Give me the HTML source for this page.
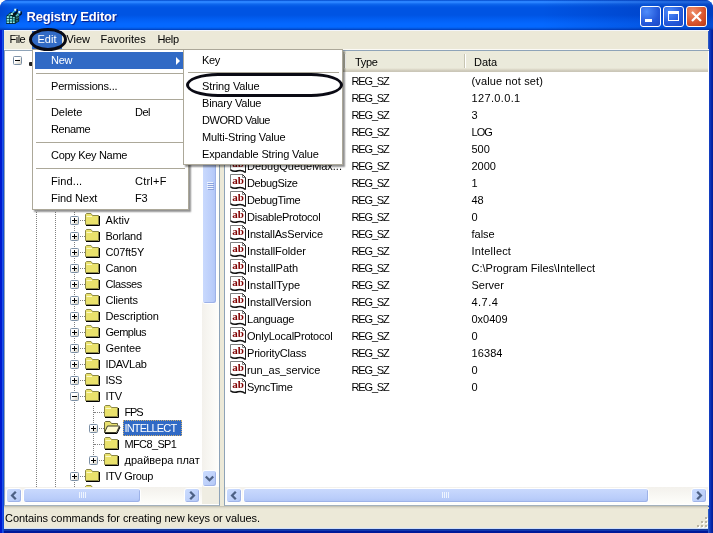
<!DOCTYPE html>
<html><head><meta charset="utf-8"><title>Registry Editor</title>
<style>
*{box-sizing:border-box;margin:0;padding:0}
html,body{width:713px;height:533px;overflow:hidden;background:#fff}
body{font-family:"Liberation Sans","DejaVu Sans",sans-serif;font-size:11px;color:#000;position:relative}
div,span,svg{position:absolute}
#win{will-change:transform;left:0;top:0;width:713px;height:533px;background:#0a36d6;border-radius:8px 8px 0 0;overflow:hidden}
#title{left:0;top:0;width:713px;height:30px;background:linear-gradient(90deg,rgba(0,20,140,.18) 0,rgba(0,20,140,0) 12px,rgba(0,20,140,0) 76%,rgba(0,16,120,.32) 100%),linear-gradient(#0046c8 0px,#2a83ff 1.5px,#2a83ff 2.5px,#0f68ee 4px,#045ae6 6px,#0054e3 8px,#0054e3 15px,#0260f5 20px,#0468ff 24px,#0468ff 27px,#0358e0 28.5px,#003cba 30px)}
#title .txt{left:26.5px;top:9px;font-size:13px;letter-spacing:-0.2px;font-weight:bold;color:#fff;text-shadow:1px 1px 1px #0a1883;white-space:nowrap}
#client{left:4px;top:30px;width:704px;height:498px;background:#ece9d8}
#bl{left:0;top:30px;width:4px;height:503px;background:linear-gradient(90deg,#0019cf 0,#0019cf 1.5px,#1a50e8 2.5px,#0a42d2 4px)}
#br{left:708px;top:30px;width:5px;height:503px;background:linear-gradient(90deg,#4070c8 0,#1844c4 1px,#0c34b8 2.5px,#0528a8 3.5px,#001c98 5px)}
#bb{left:0;top:528px;width:713px;height:5px;background:linear-gradient(#d0e0fc 0,#d0e0fc 1px,#1a3a90 1px,#1a3a90 2px,#1038b0 2px,#1038b0 3px,#001898 3.5px,#001898 5px)}
.mi{top:31px;height:17px;line-height:17px;white-space:nowrap}
.menu{background:#fff;border:1px solid #aca899;box-shadow:2px 2px 1.5px rgba(0,0,0,.42)}
.it{height:17px;line-height:17px;white-space:nowrap}
.sep{height:1px;background:#aca899}
.r{height:17px;line-height:17px;white-space:nowrap}
.t{height:16px;line-height:16px;white-space:nowrap}
.pane{background:#fff;border:1px solid #8ea3b8;border-bottom-color:#a3b1bd}
.hd{top:51px;height:21px;background:linear-gradient(#ebeadb 0,#ebeadb 17px,#e2dece 18px,#d6d2c2 19px,#cbc7b8 20px,#cbc7b8 21px)}
.sbh{height:17px;background:linear-gradient(#f3f1ec,#fefefb)}
.sbv{width:17px;background:linear-gradient(90deg,#f3f1ec,#fefefb)}
.btn{width:16px;height:15px;background:linear-gradient(135deg,#cbdcff,#b4c8f6);border:1px solid #fff;border-radius:3px;box-shadow:inset -1px -1px 0 #a0b4e8}
.thh{height:15px;background:linear-gradient(#c9d9fd,#bacdfa 70%,#b0c4f5);border:1px solid #fff;border-radius:3px;box-shadow:inset -1px -1px 0 #9db2e8}
.thv{width:15px;background:linear-gradient(90deg,#c9d9fd,#bacdfa 70%,#b0c4f5);border:1px solid #fff;border-radius:3px;box-shadow:inset -1px -1px 0 #9db2e8}
.dv{width:0;border-left:1px dotted #808080}
.dh{height:0;border-top:1px dotted #808080}
.pm{width:9px;height:9px;border:1px solid #7b8fa5;border-radius:1.5px;background:linear-gradient(135deg,#fff 40%,#d4d0c2)}
.pm i{position:absolute;left:1px;top:3px;width:5px;height:1px;background:#000}
.pm b{position:absolute;left:3px;top:1px;width:1px;height:5px;background:#000}
</style></head><body>
<div id="win">
<div id="title"><span class="txt">Registry Editor</span></div>
<div id="client"></div><div id="bb"></div><div id="bl"></div><div id="br"></div>

<svg style="left:6px;top:8px" width="16" height="16" viewBox="0 0 16 16">
<polygon points="0.500,8 4,4.500 11.500,4.500 9,8" fill="#03181c"/>
<polygon points="9,8 11.500,4.500 13.200,5.500 13.200,13.500 9,15.800" fill="#0a3436"/>
<rect x="0.300" y="7.800" width="8.900" height="8" fill="#052a2c"/>
<g fill="#45c4c0"><rect x="0.700" y="8.200" width="2.400" height="2"/><rect x="3.700" y="8.200" width="2.400" height="2"/><rect x="6.700" y="9" width="2" height="1.500"/><rect x="0.700" y="10.800" width="2.400" height="2"/><rect x="3.700" y="10.800" width="2.400" height="2"/><rect x="6.700" y="11" width="2" height="1.800"/><rect x="0.700" y="13.300" width="2.400" height="2"/><rect x="3.700" y="13.300" width="2.400" height="2"/><rect x="6.700" y="13.300" width="2.200" height="2"/></g>
<g fill="#e4fffb"><rect x="1.200" y="8.500" width="1.400" height="1"/><rect x="4.500" y="8.500" width="1.200" height="1"/><rect x="1.200" y="11.200" width="1.400" height="1"/><rect x="4.300" y="11" width="1.200" height="1.200"/><rect x="1.400" y="13.800" width="1.300" height="1"/><rect x="4.300" y="13.800" width="1.300" height="1"/><rect x="7.200" y="13.700" width="1" height="1"/><rect x="7.500" y="9.300" width="0.900" height="1"/></g>
<polygon points="1.500,7.600 3.800,5.600 6,5.600 4,7.600" fill="#45c4c0"/>
<rect x="5" y="5.200" width="2" height="1.600" fill="#e4fffb"/>
<path d="M11 7v6.500M12.300 6.500v3" stroke="#7fd8d4" stroke-width="0.700" stroke-dasharray="1.500 1"/>
<path d="M8.200 3.200L6.300 5.300M12.400 5.600L10 8" stroke="#58c8c8" stroke-width="1.200"/>
<rect x="8.200" y="0.700" width="2.300" height="2.300" fill="#9fe8e4"/><rect x="8.700" y="0.900" width="1.200" height="1.300" fill="#fff"/><path d="M11.100 1.200v2.500l-1.800 1.500" stroke="#020c14" stroke-width="1.300" fill="none"/>
<rect x="12.300" y="3" width="2.300" height="2.400" fill="#9fe8e4"/><rect x="12.700" y="3.200" width="1.200" height="1.400" fill="#fff"/><path d="M15.200 3.500v2.500l-1.800 1.500" stroke="#020c14" stroke-width="1.300" fill="none"/>
<path d="M0.300 15.800H9.300" stroke="#02101a" stroke-width="0.800"/>
</svg>
<div style="left:640px;top:6px;width:21px;height:21px;border:1px solid #fff;border-radius:3px;background:radial-gradient(circle at 30% 25%,#4f8dfb,#2458d9 60%,#1c49c4)"><div style="left:4px;top:12px;width:7px;height:3px;background:#fff"></div></div>
<div style="left:663px;top:6px;width:21px;height:21px;border:1px solid #fff;border-radius:3px;background:radial-gradient(circle at 30% 25%,#4f8dfb,#2458d9 60%,#1c49c4)"><div style="left:4px;top:4px;width:11px;height:10px;border:1px solid #fff;border-top-width:3px"></div></div>
<div style="left:686px;top:6px;width:21px;height:21px;border:1px solid #fff;border-radius:3px;background:radial-gradient(circle at 30% 25%,#f0906c,#d8532c 60%,#b93a16)"><svg width="19" height="19" viewBox="0 0 19 19" style="left:0;top:0"><path d="M5 5L14 14M14 5L5 14" stroke="#fff" stroke-width="2.2"/></svg></div>
<span class="mi" style="left:9.5px;letter-spacing:-0.5px">File</span>
<span class="mi" style="left:32px;top:30px;width:30px;height:20px;background:#316ac5"></span>
<span class="mi" style="left:37.5px;color:#fff">Edit</span>
<span class="mi" style="left:66.5px;letter-spacing:-0.1px">View</span>
<span class="mi" style="left:100.5px">Favorites</span>
<span class="mi" style="left:157.5px;letter-spacing:-0.36px">Help</span>
<div class="pane" style="left:4px;top:50px;width:216px;height:456px"></div>
<div class="pm" style="left:13px;top:56px"><i></i></div>
<div style="left:29px;top:62px;width:4px;height:4px;background:#222;border-radius:1px 0 0 1px"></div>
<div class="dv" style="left:36px;top:212px;height:275px"></div>
<div class="dv" style="left:55px;top:212px;height:275px"></div>
<div class="dv" style="left:74px;top:212px;height:275px"></div>
<div class="dv" style="left:93px;top:406px;height:55px"></div>
<div class="dh" style="left:75px;top:220px;width:10px"></div>
<div class="pm" style="left:70px;top:216px"><i></i><b></b></div>
<svg style="left:85px;top:212px" width="17" height="15" viewBox="0 0 17 15"><path d="M0.5 12.5V2.5l1-1h4.5l1.5 2h6v9z" fill="#eae26c" stroke="#8c8848"/><path d="M1.5 4.5h5.5" stroke="#fbf8c8"/><path d="M1 13.5h13.500V4" fill="none" stroke="#000"/></svg>
<span class="t" style="left:105.5px;top:212px;letter-spacing:0.07px">Aktiv</span>
<div class="dh" style="left:75px;top:236px;width:10px"></div>
<div class="pm" style="left:70px;top:232px"><i></i><b></b></div>
<svg style="left:85px;top:228px" width="17" height="15" viewBox="0 0 17 15"><path d="M0.5 12.5V2.5l1-1h4.5l1.5 2h6v9z" fill="#eae26c" stroke="#8c8848"/><path d="M1.5 4.5h5.5" stroke="#fbf8c8"/><path d="M1 13.5h13.500V4" fill="none" stroke="#000"/></svg>
<span class="t" style="left:105.5px;top:228px;letter-spacing:-0.22px">Borland</span>
<div class="dh" style="left:75px;top:252px;width:10px"></div>
<div class="pm" style="left:70px;top:248px"><i></i><b></b></div>
<svg style="left:85px;top:244px" width="17" height="15" viewBox="0 0 17 15"><path d="M0.5 12.5V2.5l1-1h4.5l1.5 2h6v9z" fill="#eae26c" stroke="#8c8848"/><path d="M1.5 4.5h5.5" stroke="#fbf8c8"/><path d="M1 13.5h13.500V4" fill="none" stroke="#000"/></svg>
<span class="t" style="left:105.5px;top:244px;letter-spacing:-0.16px">C07ft5Y</span>
<div class="dh" style="left:75px;top:268px;width:10px"></div>
<div class="pm" style="left:70px;top:264px"><i></i><b></b></div>
<svg style="left:85px;top:260px" width="17" height="15" viewBox="0 0 17 15"><path d="M0.5 12.5V2.5l1-1h4.5l1.5 2h6v9z" fill="#eae26c" stroke="#8c8848"/><path d="M1.5 4.5h5.5" stroke="#fbf8c8"/><path d="M1 13.5h13.500V4" fill="none" stroke="#000"/></svg>
<span class="t" style="left:105.5px;top:260px;letter-spacing:-0.26px">Canon</span>
<div class="dh" style="left:75px;top:284px;width:10px"></div>
<div class="pm" style="left:70px;top:280px"><i></i><b></b></div>
<svg style="left:85px;top:276px" width="17" height="15" viewBox="0 0 17 15"><path d="M0.5 12.5V2.5l1-1h4.5l1.5 2h6v9z" fill="#eae26c" stroke="#8c8848"/><path d="M1.5 4.5h5.5" stroke="#fbf8c8"/><path d="M1 13.5h13.500V4" fill="none" stroke="#000"/></svg>
<span class="t" style="left:105.5px;top:276px;letter-spacing:-0.39px">Classes</span>
<div class="dh" style="left:75px;top:300px;width:10px"></div>
<div class="pm" style="left:70px;top:296px"><i></i><b></b></div>
<svg style="left:85px;top:292px" width="17" height="15" viewBox="0 0 17 15"><path d="M0.5 12.5V2.5l1-1h4.5l1.5 2h6v9z" fill="#eae26c" stroke="#8c8848"/><path d="M1.5 4.5h5.5" stroke="#fbf8c8"/><path d="M1 13.5h13.500V4" fill="none" stroke="#000"/></svg>
<span class="t" style="left:105.5px;top:292px;letter-spacing:-0.2px">Clients</span>
<div class="dh" style="left:75px;top:316px;width:10px"></div>
<div class="pm" style="left:70px;top:312px"><i></i><b></b></div>
<svg style="left:85px;top:308px" width="17" height="15" viewBox="0 0 17 15"><path d="M0.5 12.5V2.5l1-1h4.5l1.5 2h6v9z" fill="#eae26c" stroke="#8c8848"/><path d="M1.5 4.5h5.5" stroke="#fbf8c8"/><path d="M1 13.5h13.500V4" fill="none" stroke="#000"/></svg>
<span class="t" style="left:105.5px;top:308px;letter-spacing:-0.17px">Description</span>
<div class="dh" style="left:75px;top:332px;width:10px"></div>
<div class="pm" style="left:70px;top:328px"><i></i><b></b></div>
<svg style="left:85px;top:324px" width="17" height="15" viewBox="0 0 17 15"><path d="M0.5 12.5V2.5l1-1h4.5l1.5 2h6v9z" fill="#eae26c" stroke="#8c8848"/><path d="M1.5 4.5h5.5" stroke="#fbf8c8"/><path d="M1 13.5h13.500V4" fill="none" stroke="#000"/></svg>
<span class="t" style="left:105.5px;top:324px;letter-spacing:-0.5px">Gemplus</span>
<div class="dh" style="left:75px;top:348px;width:10px"></div>
<div class="pm" style="left:70px;top:344px"><i></i><b></b></div>
<svg style="left:85px;top:340px" width="17" height="15" viewBox="0 0 17 15"><path d="M0.5 12.5V2.5l1-1h4.5l1.5 2h6v9z" fill="#eae26c" stroke="#8c8848"/><path d="M1.5 4.5h5.5" stroke="#fbf8c8"/><path d="M1 13.5h13.500V4" fill="none" stroke="#000"/></svg>
<span class="t" style="left:105.5px;top:340px;letter-spacing:-0.11px">Gentee</span>
<div class="dh" style="left:75px;top:364px;width:10px"></div>
<div class="pm" style="left:70px;top:360px"><i></i><b></b></div>
<svg style="left:85px;top:356px" width="17" height="15" viewBox="0 0 17 15"><path d="M0.5 12.5V2.5l1-1h4.5l1.5 2h6v9z" fill="#eae26c" stroke="#8c8848"/><path d="M1.5 4.5h5.5" stroke="#fbf8c8"/><path d="M1 13.5h13.500V4" fill="none" stroke="#000"/></svg>
<span class="t" style="left:105.5px;top:356px;letter-spacing:-0.32px">IDAVLab</span>
<div class="dh" style="left:75px;top:380px;width:10px"></div>
<div class="pm" style="left:70px;top:376px"><i></i><b></b></div>
<svg style="left:85px;top:372px" width="17" height="15" viewBox="0 0 17 15"><path d="M0.5 12.5V2.5l1-1h4.5l1.5 2h6v9z" fill="#eae26c" stroke="#8c8848"/><path d="M1.5 4.5h5.5" stroke="#fbf8c8"/><path d="M1 13.5h13.500V4" fill="none" stroke="#000"/></svg>
<span class="t" style="left:105.5px;top:372px;letter-spacing:-0.48px">ISS</span>
<div class="dh" style="left:75px;top:396px;width:10px"></div>
<div class="pm" style="left:70px;top:392px"><i></i></div>
<svg style="left:85px;top:388px" width="17" height="15" viewBox="0 0 17 15"><path d="M0.5 12.5V2.5l1-1h4.5l1.5 2h6v9z" fill="#eae26c" stroke="#8c8848"/><path d="M1.5 4.5h5.5" stroke="#fbf8c8"/><path d="M1 13.5h13.500V4" fill="none" stroke="#000"/></svg>
<span class="t" style="left:105.5px;top:388px;letter-spacing:-0.27px">ITV</span>
<div class="dh" style="left:94px;top:412px;width:10px"></div>
<svg style="left:104px;top:404px" width="17" height="15" viewBox="0 0 17 15"><path d="M0.5 12.5V2.5l1-1h4.5l1.5 2h6v9z" fill="#eae26c" stroke="#8c8848"/><path d="M1.5 4.5h5.5" stroke="#fbf8c8"/><path d="M1 13.5h13.500V4" fill="none" stroke="#000"/></svg>
<span class="t" style="left:124.5px;top:404px;letter-spacing:-1.1px">FPS</span>
<div class="dh" style="left:94px;top:428px;width:10px"></div>
<div class="pm" style="left:89px;top:424px"><i></i><b></b></div>
<svg style="left:104px;top:420px" width="17" height="15" viewBox="0 0 17 15"><path d="M0.5 12.5V2.5l1-1h4.5l1.5 2h6v2" fill="#e9e170" stroke="#6b6838"/><path d="M0.5 12.5l3-6.5h12l-3 6.5z" fill="#fffbd0" stroke="#3a3a2a"/><path d="M1 13.5h12l3-6.5" fill="none" stroke="#000"/></svg>
<span class="t" style="left:123px;top:420px;width:59px;background:#316ac5;color:#fff;padding:0 1.500px;letter-spacing:-0.83px;outline:1px dotted #d0b070;outline-offset:-1px">INTELLECT</span>
<div class="dh" style="left:94px;top:444px;width:10px"></div>
<svg style="left:104px;top:436px" width="17" height="15" viewBox="0 0 17 15"><path d="M0.5 12.5V2.5l1-1h4.5l1.5 2h6v9z" fill="#eae26c" stroke="#8c8848"/><path d="M1.5 4.5h5.5" stroke="#fbf8c8"/><path d="M1 13.5h13.500V4" fill="none" stroke="#000"/></svg>
<span class="t" style="left:124.5px;top:436px;letter-spacing:-0.63px">MFC8_SP1</span>
<div class="dh" style="left:94px;top:460px;width:10px"></div>
<div class="pm" style="left:89px;top:456px"><i></i><b></b></div>
<svg style="left:104px;top:452px" width="17" height="15" viewBox="0 0 17 15"><path d="M0.5 12.5V2.5l1-1h4.5l1.5 2h6v9z" fill="#eae26c" stroke="#8c8848"/><path d="M1.5 4.5h5.5" stroke="#fbf8c8"/><path d="M1 13.5h13.500V4" fill="none" stroke="#000"/></svg>
<span class="t" style="left:124.5px;top:452px;letter-spacing:0px">драйвера плат</span>
<div class="dh" style="left:75px;top:476px;width:10px"></div>
<div class="pm" style="left:70px;top:472px"><i></i><b></b></div>
<svg style="left:85px;top:468px" width="17" height="15" viewBox="0 0 17 15"><path d="M0.5 12.5V2.5l1-1h4.5l1.5 2h6v9z" fill="#eae26c" stroke="#8c8848"/><path d="M1.5 4.5h5.5" stroke="#fbf8c8"/><path d="M1 13.5h13.500V4" fill="none" stroke="#000"/></svg>
<span class="t" style="left:105.5px;top:468px;letter-spacing:-0.36px">ITV Group</span>
<svg style="left:85px;top:484px" width="17" height="15" viewBox="0 0 17 15"><path d="M0.5 12.5V2.5l1-1h4.5l1.5 2h6v9z" fill="#eae26c" stroke="#8c8848"/><path d="M1.5 4.5h5.5" stroke="#fbf8c8"/><path d="M1 13.5h13.500V4" fill="none" stroke="#000"/></svg>
<div class="sbv" style="left:202px;top:51px;height:436px"></div>
<div class="thv" style="left:202px;top:68px;height:236px"></div>
<div style="left:207px;top:182px;width:6px;height:1px;background:#eef4fe"></div><div style="left:208px;top:183px;width:6px;height:1px;background:#8ca2dc"></div>
<div style="left:207px;top:184px;width:6px;height:1px;background:#eef4fe"></div><div style="left:208px;top:185px;width:6px;height:1px;background:#8ca2dc"></div>
<div style="left:207px;top:186px;width:6px;height:1px;background:#eef4fe"></div><div style="left:208px;top:187px;width:6px;height:1px;background:#8ca2dc"></div>
<div style="left:207px;top:188px;width:6px;height:1px;background:#eef4fe"></div><div style="left:208px;top:189px;width:6px;height:1px;background:#8ca2dc"></div>
<div class="btn" style="left:202px;top:470px;width:15px;height:17px"><svg width="13" height="15" viewBox="0 0 13 15" style="left:0;top:0"><path d="M2.800 5.500l3.700 3.700l3.700-3.700" stroke="#4d6185" stroke-width="2.300" fill="none"/></svg></div>
<div class="sbh" style="left:5px;top:487px;width:197px"></div>
<div style="left:202px;top:487px;width:17px;height:17px;background:#efede2"></div>
<div class="btn" style="left:6px;top:488px"><svg width="14" height="13" viewBox="0 0 14 13" style="left:0;top:0"><path d="M8.800 2.800l-3.700 3.700l3.700 3.700" stroke="#4d6185" stroke-width="2.300" fill="none"/></svg></div>
<div class="btn" style="left:184px;top:488px"><svg width="14" height="13" viewBox="0 0 14 13" style="left:0;top:0"><path d="M5.200 2.800l3.700 3.700l-3.700 3.700" stroke="#4d6185" stroke-width="2.300" fill="none"/></svg></div>
<div class="thh" style="left:23px;top:488px;width:118px"></div>
<div style="left:79px;top:492px;width:1px;height:6px;background:#eef4fe"></div>
<div style="left:81px;top:492px;width:1px;height:6px;background:#eef4fe"></div>
<div style="left:83px;top:492px;width:1px;height:6px;background:#eef4fe"></div>
<div style="left:85px;top:492px;width:1px;height:6px;background:#eef4fe"></div>
<div class="pane" style="left:224px;top:50px;width:485px;height:456px;border-right:0"></div>
<div class="hd" style="left:225px;width:483px"></div>
<span class="r" style="left:355px;top:54px;letter-spacing:-0.34px">Type</span>
<span class="r" style="left:474px;top:54px">Data</span>
<div style="left:344px;top:54px;width:1px;height:14px;background:#c7c5b2"></div><div style="left:345px;top:54px;width:1px;height:14px;background:#fff"></div>
<div style="left:464px;top:54px;width:1px;height:14px;background:#c7c5b2"></div><div style="left:465px;top:54px;width:1px;height:14px;background:#fff"></div>
<span class="r" style="left:351.5px;top:73px;letter-spacing:-1.15px">REG_SZ</span>
<span class="r" style="left:471.5px;top:73px;letter-spacing:0.12px">(value not set)</span>
<span class="r" style="left:351.5px;top:90px;letter-spacing:-1.15px">REG_SZ</span>
<span class="r" style="left:471.5px;top:90px;letter-spacing:0.35px">127.0.0.1</span>
<span class="r" style="left:351.5px;top:107px;letter-spacing:-1.15px">REG_SZ</span>
<span class="r" style="left:471.5px;top:107px;letter-spacing:0px">3</span>
<span class="r" style="left:351.5px;top:124px;letter-spacing:-1.15px">REG_SZ</span>
<span class="r" style="left:471.5px;top:124px;letter-spacing:-0.98px">LOG</span>
<span class="r" style="left:351.5px;top:141px;letter-spacing:-1.15px">REG_SZ</span>
<span class="r" style="left:471.5px;top:141px;letter-spacing:0px">500</span>
<svg style="left:230px;top:157px" width="17" height="17" viewBox="0 0 17 17"><path d="M0.5 0.5H12.5L15.5 3.5V15.5C12 12.5 10 13 8 13.800S3.500 14.800 0.500 12.500z" fill="#fff"/><path d="M0.5 13V0.5H12.5" fill="none" stroke="#808080"/><path d="M12.5 0.5V3.500H15.500" fill="none" stroke="#808080"/><path d="M12.5 0.5L15.500 3.500V15.500" fill="none" stroke="#222"/><path d="M0.5 12.8C3.500 15 6 14.500 8 13.800S12 12.800 15.500 15.500" fill="none" stroke="#111" stroke-width="1.5"/><text x="2.200" y="10" font-family="Liberation Serif,serif" font-weight="bold" font-size="11" fill="#800000">ab</text></svg>
<span class="r" style="left:247px;top:158px;letter-spacing:-0.03px">DebugQueueMax...</span>
<span class="r" style="left:351.5px;top:158px;letter-spacing:-1.15px">REG_SZ</span>
<span class="r" style="left:471.5px;top:158px;letter-spacing:0px">2000</span>
<svg style="left:230px;top:174px" width="17" height="17" viewBox="0 0 17 17"><path d="M0.5 0.5H12.5L15.5 3.5V15.5C12 12.5 10 13 8 13.800S3.500 14.800 0.500 12.500z" fill="#fff"/><path d="M0.5 13V0.5H12.5" fill="none" stroke="#808080"/><path d="M12.5 0.5V3.500H15.500" fill="none" stroke="#808080"/><path d="M12.5 0.5L15.500 3.500V15.500" fill="none" stroke="#222"/><path d="M0.5 12.8C3.500 15 6 14.500 8 13.800S12 12.800 15.500 15.500" fill="none" stroke="#111" stroke-width="1.5"/><text x="2.200" y="10" font-family="Liberation Serif,serif" font-weight="bold" font-size="11" fill="#800000">ab</text></svg>
<span class="r" style="left:247px;top:175px;letter-spacing:-0.36px">DebugSize</span>
<span class="r" style="left:351.5px;top:175px;letter-spacing:-1.15px">REG_SZ</span>
<span class="r" style="left:471.5px;top:175px;letter-spacing:0px">1</span>
<svg style="left:230px;top:191px" width="17" height="17" viewBox="0 0 17 17"><path d="M0.5 0.5H12.5L15.5 3.5V15.5C12 12.5 10 13 8 13.800S3.500 14.800 0.500 12.500z" fill="#fff"/><path d="M0.5 13V0.5H12.5" fill="none" stroke="#808080"/><path d="M12.5 0.5V3.500H15.500" fill="none" stroke="#808080"/><path d="M12.5 0.5L15.500 3.500V15.500" fill="none" stroke="#222"/><path d="M0.5 12.8C3.500 15 6 14.500 8 13.800S12 12.800 15.500 15.500" fill="none" stroke="#111" stroke-width="1.5"/><text x="2.200" y="10" font-family="Liberation Serif,serif" font-weight="bold" font-size="11" fill="#800000">ab</text></svg>
<span class="r" style="left:247px;top:192px;letter-spacing:-0.36px">DebugTime</span>
<span class="r" style="left:351.5px;top:192px;letter-spacing:-1.15px">REG_SZ</span>
<span class="r" style="left:471.5px;top:192px;letter-spacing:-0.12px">48</span>
<svg style="left:230px;top:208px" width="17" height="17" viewBox="0 0 17 17"><path d="M0.5 0.5H12.5L15.5 3.5V15.5C12 12.5 10 13 8 13.800S3.500 14.800 0.500 12.500z" fill="#fff"/><path d="M0.5 13V0.5H12.5" fill="none" stroke="#808080"/><path d="M12.5 0.5V3.500H15.500" fill="none" stroke="#808080"/><path d="M12.5 0.5L15.500 3.500V15.500" fill="none" stroke="#222"/><path d="M0.5 12.8C3.500 15 6 14.500 8 13.800S12 12.800 15.500 15.500" fill="none" stroke="#111" stroke-width="1.5"/><text x="2.200" y="10" font-family="Liberation Serif,serif" font-weight="bold" font-size="11" fill="#800000">ab</text></svg>
<span class="r" style="left:247px;top:209px;letter-spacing:-0.24px">DisableProtocol</span>
<span class="r" style="left:351.5px;top:209px;letter-spacing:-1.15px">REG_SZ</span>
<span class="r" style="left:471.5px;top:209px;letter-spacing:0px">0</span>
<svg style="left:230px;top:225px" width="17" height="17" viewBox="0 0 17 17"><path d="M0.5 0.5H12.5L15.5 3.5V15.5C12 12.5 10 13 8 13.800S3.500 14.800 0.500 12.500z" fill="#fff"/><path d="M0.5 13V0.5H12.5" fill="none" stroke="#808080"/><path d="M12.5 0.5V3.500H15.500" fill="none" stroke="#808080"/><path d="M12.5 0.5L15.500 3.500V15.500" fill="none" stroke="#222"/><path d="M0.5 12.8C3.500 15 6 14.500 8 13.800S12 12.800 15.500 15.500" fill="none" stroke="#111" stroke-width="1.5"/><text x="2.200" y="10" font-family="Liberation Serif,serif" font-weight="bold" font-size="11" fill="#800000">ab</text></svg>
<span class="r" style="left:247px;top:226px;letter-spacing:-0.15px">InstallAsService</span>
<span class="r" style="left:351.5px;top:226px;letter-spacing:-1.15px">REG_SZ</span>
<span class="r" style="left:471.5px;top:226px;letter-spacing:0px">false</span>
<svg style="left:230px;top:242px" width="17" height="17" viewBox="0 0 17 17"><path d="M0.5 0.5H12.5L15.5 3.5V15.5C12 12.5 10 13 8 13.800S3.500 14.800 0.500 12.500z" fill="#fff"/><path d="M0.5 13V0.5H12.5" fill="none" stroke="#808080"/><path d="M12.5 0.5V3.500H15.500" fill="none" stroke="#808080"/><path d="M12.5 0.5L15.500 3.500V15.500" fill="none" stroke="#222"/><path d="M0.5 12.8C3.500 15 6 14.500 8 13.800S12 12.800 15.500 15.500" fill="none" stroke="#111" stroke-width="1.5"/><text x="2.200" y="10" font-family="Liberation Serif,serif" font-weight="bold" font-size="11" fill="#800000">ab</text></svg>
<span class="r" style="left:247px;top:243px;letter-spacing:-0.09px">InstallFolder</span>
<span class="r" style="left:351.5px;top:243px;letter-spacing:-1.15px">REG_SZ</span>
<span class="r" style="left:471.5px;top:243px;letter-spacing:0.19px">Intellect</span>
<svg style="left:230px;top:259px" width="17" height="17" viewBox="0 0 17 17"><path d="M0.5 0.5H12.5L15.5 3.5V15.5C12 12.5 10 13 8 13.800S3.500 14.800 0.500 12.500z" fill="#fff"/><path d="M0.5 13V0.5H12.5" fill="none" stroke="#808080"/><path d="M12.5 0.5V3.500H15.500" fill="none" stroke="#808080"/><path d="M12.5 0.5L15.500 3.500V15.500" fill="none" stroke="#222"/><path d="M0.5 12.8C3.500 15 6 14.500 8 13.800S12 12.800 15.500 15.500" fill="none" stroke="#111" stroke-width="1.5"/><text x="2.200" y="10" font-family="Liberation Serif,serif" font-weight="bold" font-size="11" fill="#800000">ab</text></svg>
<span class="r" style="left:247px;top:260px;letter-spacing:-0.02px">InstallPath</span>
<span class="r" style="left:351.5px;top:260px;letter-spacing:-1.15px">REG_SZ</span>
<span class="r" style="left:471.5px;top:260px;letter-spacing:0px">C:\Program Files\Intellect</span>
<svg style="left:230px;top:276px" width="17" height="17" viewBox="0 0 17 17"><path d="M0.5 0.5H12.5L15.5 3.5V15.5C12 12.5 10 13 8 13.800S3.500 14.800 0.500 12.500z" fill="#fff"/><path d="M0.5 13V0.5H12.5" fill="none" stroke="#808080"/><path d="M12.5 0.5V3.500H15.500" fill="none" stroke="#808080"/><path d="M12.5 0.5L15.500 3.500V15.500" fill="none" stroke="#222"/><path d="M0.5 12.8C3.500 15 6 14.500 8 13.800S12 12.800 15.500 15.500" fill="none" stroke="#111" stroke-width="1.5"/><text x="2.200" y="10" font-family="Liberation Serif,serif" font-weight="bold" font-size="11" fill="#800000">ab</text></svg>
<span class="r" style="left:247px;top:277px;letter-spacing:0.06px">InstallType</span>
<span class="r" style="left:351.5px;top:277px;letter-spacing:-1.15px">REG_SZ</span>
<span class="r" style="left:471.5px;top:277px;letter-spacing:0px">Server</span>
<svg style="left:230px;top:293px" width="17" height="17" viewBox="0 0 17 17"><path d="M0.5 0.5H12.5L15.5 3.5V15.5C12 12.5 10 13 8 13.800S3.500 14.800 0.500 12.500z" fill="#fff"/><path d="M0.5 13V0.5H12.5" fill="none" stroke="#808080"/><path d="M12.5 0.5V3.500H15.500" fill="none" stroke="#808080"/><path d="M12.5 0.5L15.500 3.500V15.500" fill="none" stroke="#222"/><path d="M0.5 12.8C3.500 15 6 14.500 8 13.800S12 12.800 15.500 15.500" fill="none" stroke="#111" stroke-width="1.5"/><text x="2.200" y="10" font-family="Liberation Serif,serif" font-weight="bold" font-size="11" fill="#800000">ab</text></svg>
<span class="r" style="left:247px;top:294px;letter-spacing:-0.08px">InstallVersion</span>
<span class="r" style="left:351.5px;top:294px;letter-spacing:-1.15px">REG_SZ</span>
<span class="r" style="left:471.5px;top:294px;letter-spacing:0.45px">4.7.4</span>
<svg style="left:230px;top:310px" width="17" height="17" viewBox="0 0 17 17"><path d="M0.5 0.5H12.5L15.5 3.5V15.5C12 12.5 10 13 8 13.800S3.500 14.800 0.500 12.500z" fill="#fff"/><path d="M0.5 13V0.5H12.5" fill="none" stroke="#808080"/><path d="M12.5 0.5V3.500H15.500" fill="none" stroke="#808080"/><path d="M12.5 0.5L15.500 3.500V15.500" fill="none" stroke="#222"/><path d="M0.5 12.8C3.500 15 6 14.500 8 13.800S12 12.800 15.500 15.500" fill="none" stroke="#111" stroke-width="1.5"/><text x="2.200" y="10" font-family="Liberation Serif,serif" font-weight="bold" font-size="11" fill="#800000">ab</text></svg>
<span class="r" style="left:247px;top:311px;letter-spacing:-0.22px">Language</span>
<span class="r" style="left:351.5px;top:311px;letter-spacing:-1.15px">REG_SZ</span>
<span class="r" style="left:471.5px;top:311px;letter-spacing:0px">0x0409</span>
<svg style="left:230px;top:327px" width="17" height="17" viewBox="0 0 17 17"><path d="M0.5 0.5H12.5L15.5 3.5V15.5C12 12.5 10 13 8 13.800S3.500 14.800 0.500 12.500z" fill="#fff"/><path d="M0.5 13V0.5H12.5" fill="none" stroke="#808080"/><path d="M12.5 0.5V3.500H15.500" fill="none" stroke="#808080"/><path d="M12.5 0.5L15.500 3.500V15.500" fill="none" stroke="#222"/><path d="M0.5 12.8C3.500 15 6 14.500 8 13.800S12 12.800 15.500 15.500" fill="none" stroke="#111" stroke-width="1.5"/><text x="2.200" y="10" font-family="Liberation Serif,serif" font-weight="bold" font-size="11" fill="#800000">ab</text></svg>
<span class="r" style="left:247px;top:328px;letter-spacing:-0.23px">OnlyLocalProtocol</span>
<span class="r" style="left:351.5px;top:328px;letter-spacing:-1.15px">REG_SZ</span>
<span class="r" style="left:471.5px;top:328px;letter-spacing:0px">0</span>
<svg style="left:230px;top:344px" width="17" height="17" viewBox="0 0 17 17"><path d="M0.5 0.5H12.5L15.5 3.5V15.5C12 12.5 10 13 8 13.800S3.500 14.800 0.500 12.500z" fill="#fff"/><path d="M0.5 13V0.5H12.5" fill="none" stroke="#808080"/><path d="M12.5 0.5V3.500H15.500" fill="none" stroke="#808080"/><path d="M12.5 0.5L15.500 3.500V15.500" fill="none" stroke="#222"/><path d="M0.5 12.8C3.500 15 6 14.500 8 13.800S12 12.800 15.500 15.500" fill="none" stroke="#111" stroke-width="1.5"/><text x="2.200" y="10" font-family="Liberation Serif,serif" font-weight="bold" font-size="11" fill="#800000">ab</text></svg>
<span class="r" style="left:247px;top:345px;letter-spacing:-0.19px">PriorityClass</span>
<span class="r" style="left:351.5px;top:345px;letter-spacing:-1.15px">REG_SZ</span>
<span class="r" style="left:471.5px;top:345px;letter-spacing:0.1px">16384</span>
<svg style="left:230px;top:361px" width="17" height="17" viewBox="0 0 17 17"><path d="M0.5 0.5H12.5L15.5 3.5V15.5C12 12.5 10 13 8 13.800S3.500 14.800 0.500 12.500z" fill="#fff"/><path d="M0.5 13V0.5H12.5" fill="none" stroke="#808080"/><path d="M12.5 0.5V3.500H15.500" fill="none" stroke="#808080"/><path d="M12.5 0.5L15.500 3.500V15.500" fill="none" stroke="#222"/><path d="M0.5 12.8C3.500 15 6 14.500 8 13.800S12 12.800 15.500 15.500" fill="none" stroke="#111" stroke-width="1.5"/><text x="2.200" y="10" font-family="Liberation Serif,serif" font-weight="bold" font-size="11" fill="#800000">ab</text></svg>
<span class="r" style="left:247px;top:362px;letter-spacing:-0.1px">run_as_service</span>
<span class="r" style="left:351.5px;top:362px;letter-spacing:-1.15px">REG_SZ</span>
<span class="r" style="left:471.5px;top:362px;letter-spacing:0px">0</span>
<svg style="left:230px;top:378px" width="17" height="17" viewBox="0 0 17 17"><path d="M0.5 0.5H12.5L15.5 3.5V15.5C12 12.5 10 13 8 13.800S3.500 14.800 0.500 12.500z" fill="#fff"/><path d="M0.5 13V0.5H12.5" fill="none" stroke="#808080"/><path d="M12.5 0.5V3.500H15.500" fill="none" stroke="#808080"/><path d="M12.5 0.5L15.500 3.500V15.500" fill="none" stroke="#222"/><path d="M0.5 12.8C3.500 15 6 14.500 8 13.800S12 12.800 15.500 15.500" fill="none" stroke="#111" stroke-width="1.5"/><text x="2.200" y="10" font-family="Liberation Serif,serif" font-weight="bold" font-size="11" fill="#800000">ab</text></svg>
<span class="r" style="left:247px;top:379px;letter-spacing:-0.39px">SyncTime</span>
<span class="r" style="left:351.5px;top:379px;letter-spacing:-1.15px">REG_SZ</span>
<span class="r" style="left:471.5px;top:379px;letter-spacing:0px">0</span>
<div class="sbh" style="left:225px;top:487px;width:483px"></div>
<div class="btn" style="left:226px;top:488px"><svg width="14" height="13" viewBox="0 0 14 13" style="left:0;top:0"><path d="M8.800 2.800l-3.700 3.700l3.700 3.700" stroke="#4d6185" stroke-width="2.300" fill="none"/></svg></div>
<div class="btn" style="left:691px;top:488px"><svg width="14" height="13" viewBox="0 0 14 13" style="left:0;top:0"><path d="M5.200 2.800l3.700 3.700l-3.700 3.700" stroke="#4d6185" stroke-width="2.300" fill="none"/></svg></div>
<div class="thh" style="left:243px;top:488px;width:406px"></div>
<div style="left:442px;top:492px;width:1px;height:6px;background:#eef4fe"></div>
<div style="left:444px;top:492px;width:1px;height:6px;background:#eef4fe"></div>
<div style="left:446px;top:492px;width:1px;height:6px;background:#eef4fe"></div>
<div style="left:448px;top:492px;width:1px;height:6px;background:#eef4fe"></div>
<div style="left:4px;top:506px;width:704px;height:1px;background:#c8c5b5"></div>
<div style="left:4px;top:507px;width:705px;height:1px;background:#dcd9ca"></div>
<div style="left:4px;top:508px;width:705px;height:1px;background:#e6e3d4"></div>
<div style="left:4px;top:49px;width:705px;height:1px;background:#fbfaf6"></div>
<div style="left:4px;top:30px;width:705px;height:1px;background:#f4f6fb"></div>
<span class="r" style="left:5px;top:510px;letter-spacing:-0.06px">Contains commands for creating new keys or values.</span>
<div style="left:705px;top:517px;width:2px;height:2px;background:#b8b4a2;box-shadow:1px 1px 0 #fff"></div>
<div style="left:701px;top:521px;width:2px;height:2px;background:#b8b4a2;box-shadow:1px 1px 0 #fff"></div>
<div style="left:705px;top:521px;width:2px;height:2px;background:#b8b4a2;box-shadow:1px 1px 0 #fff"></div>
<div style="left:697px;top:525px;width:2px;height:2px;background:#b8b4a2;box-shadow:1px 1px 0 #fff"></div>
<div style="left:701px;top:525px;width:2px;height:2px;background:#b8b4a2;box-shadow:1px 1px 0 #fff"></div>
<div style="left:705px;top:525px;width:2px;height:2px;background:#b8b4a2;box-shadow:1px 1px 0 #fff"></div>
<div class="menu" style="left:32px;top:49px;width:157px;height:161px"></div>
<div style="left:35px;top:52px;width:151px;height:17px;background:#316ac5"></div>
<span class="it" style="left:51px;top:52px;color:#fff;letter-spacing:-0.3px">New</span>
<div style="left:176px;top:57px;width:0;height:0;border-left:4px solid #fff;border-top:4px solid transparent;border-bottom:4px solid transparent"></div>
<div class="sep" style="left:36px;top:73px;width:149px"></div>
<span class="it" style="left:51px;top:78px;color:#000;letter-spacing:-0.19px">Permissions...</span>
<div class="sep" style="left:36px;top:99px;width:149px"></div>
<span class="it" style="left:51px;top:104px;color:#000;letter-spacing:-0.08px">Delete</span>
<span class="it" style="left:135px;top:104px;color:#000;letter-spacing:-0.47px">Del</span>
<span class="it" style="left:51px;top:121px;color:#000;letter-spacing:-0.38px">Rename</span>
<div class="sep" style="left:36px;top:142px;width:149px"></div>
<span class="it" style="left:51px;top:147px;color:#000;letter-spacing:-0.31px">Copy Key Name</span>
<div class="sep" style="left:36px;top:168px;width:149px"></div>
<span class="it" style="left:51px;top:173px;color:#000;letter-spacing:0.1px">Find...</span>
<span class="it" style="left:135px;top:173px;color:#000;letter-spacing:0.23px">Ctrl+F</span>
<span class="it" style="left:51px;top:190px;color:#000;letter-spacing:-0.09px">Find Next</span>
<span class="it" style="left:135px;top:190px;color:#000;letter-spacing:-0.32px">F3</span>
<div class="menu" style="left:183px;top:49px;width:160px;height:116px"></div>
<span class="it" style="left:202px;top:52px;color:#000;letter-spacing:-0.32px">Key</span>
<div class="sep" style="left:188px;top:72px;width:151px"></div>
<span class="it" style="left:202px;top:78px;color:#000;letter-spacing:-0.13px">String Value</span>
<span class="it" style="left:202px;top:95px;color:#000;letter-spacing:-0.19px">Binary Value</span>
<span class="it" style="left:202px;top:112px;color:#000;letter-spacing:-0.47px">DWORD Value</span>
<span class="it" style="left:202px;top:129px;color:#000;letter-spacing:-0.14px">Multi-String Value</span>
<span class="it" style="left:202px;top:146px;color:#000;letter-spacing:-0.16px">Expandable String Value</span>
<div style="left:29px;top:28px;width:38px;height:23px;border:solid #0a0a14;border-width:3px 3.5px;border-radius:50%"></div>
<div style="left:186px;top:73px;width:157px;height:24px;border:solid #0a0a14;border-width:3px 3.5px;border-radius:32px/12px"></div>
</div></body></html>
